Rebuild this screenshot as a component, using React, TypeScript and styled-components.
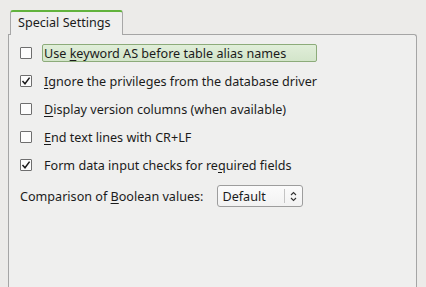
import React from "react";
import styled, { createGlobalStyle } from "styled-components";

const Global = createGlobalStyle`
  html, body { margin: 0; padding: 0; background: #ecebe9; overflow: hidden; }
  body { font-family: "Noto Sans", "Open Sans", sans-serif; font-size: 12.6px; color: #1b1b1b; }
`;

const Page = styled.div`
  width: 426px;
  height: 287px;
  padding: 10px 0 0 8px;
  box-sizing: border-box;
  display: flex;
  flex-direction: column;
`;

const TabBar = styled.div`
  display: flex;
  padding-left: 2px;
`;

const Tab = styled.div`
  position: relative;
  z-index: 1;
  margin-bottom: -1px;
  width: 113px;
  height: 25px;
  box-sizing: border-box;
  border: 1px solid #a7a7a7;
  border-top: 2px solid #62b33d;
  border-bottom: none;
  border-radius: 3px 3px 0 0;
  background: #efefee;
  padding-left: 7px;
  display: flex;
  align-items: center;
  line-height: 1;
`;

const Panel = styled.div`
  width: 409px;
  height: 270px;
  box-sizing: border-box;
  border: 1px solid #a5a5a5;
  border-bottom: none;
  border-radius: 0 3px 0 0;
  background: #efefee;
  padding: 4px 0 0 11px;
  display: flex;
  flex-direction: column;
`;

const Row = styled.label`
  display: flex;
  align-items: center;
  height: 28px;
`;

const Box = styled.span`
  width: 12px;
  height: 12px;
  box-sizing: border-box;
  border: 1px solid #6e6e6e;
  border-radius: 1px;
  background: #fcfcfc;
  display: flex;
  align-items: center;
  justify-content: center;
  margin-right: 10px;
  flex: none;
`;

const Text = styled.span<{ $hl?: boolean }>`
  box-sizing: border-box;
  height: 18px;
  display: flex;
  align-items: center;
  padding: 0 2px 0 1px;
  border: 1px solid ${(p) => (p.$hl ? "#8cab7a" : "transparent")};
  border-radius: 2px;
  background: ${(p) => (p.$hl ? "linear-gradient(#e0eed9, #d3e5ca)" : "transparent")};
  width: ${(p) => (p.$hl ? "275px" : "auto")};
  white-space: pre;
`;

const U = styled.span`
  text-decoration: underline;
  text-underline-offset: 2px;
`;

const ComboRow = styled.div`
  display: flex;
  align-items: center;
  height: 28px;
  margin-top: 3px;
`;

const ComboLabel = styled.span`
  margin-right: 14px;
  white-space: pre;
`;

const Combo = styled.div`
  width: 86px;
  height: 22px;
  box-sizing: border-box;
  border: 1px solid #9d9d9d;
  border-radius: 3px;
  background: linear-gradient(#fbfbfb, #f2f2f2);
  display: flex;
  align-items: center;
`;

const ComboText = styled.span`
  flex: 1;
  padding-left: 4px;
`;

const ComboBtn = styled.span`
  width: 17px;
  height: 14px;
  border-left: 1px solid #c4c4c4;
  display: flex;
  align-items: center;
  justify-content: center;
`;

const Check = () => (
  <svg width="10" height="10" viewBox="0 0 10 10">
    <path d="M1.5 5 L4 7.8 L8.6 1.6" fill="none" stroke="#1a1a1a" strokeWidth="1.5" />
  </svg>
);

const Spin = () => (
  <svg width="7" height="11" viewBox="0 0 7 11">
    <path d="M1 4 L3.5 1.5 L6 4 M1 7 L3.5 9.5 L6 7" fill="none" stroke="#333" strokeWidth="1.1" />
  </svg>
);

const Item = ({ checked, hl, children }: { checked?: boolean; hl?: boolean; children: React.ReactNode }) => (
  <Row>
    <Box>{checked && <Check />}</Box>
    <Text $hl={hl}>{children}</Text>
  </Row>
);

export default function App() {
  return (
    <>
      <Global />
      <Page>
        <TabBar>
          <Tab>Special Settings</Tab>
        </TabBar>
        <Panel>
          <Item hl>
            Use <U>k</U>eyword AS before table alias names
          </Item>
          <Item checked>
            <U>I</U>gnore the privileges from the database driver
          </Item>
          <Item>
            <U>D</U>isplay version columns (when available)
          </Item>
          <Item>
            <U>E</U>nd text lines with CR+LF
          </Item>
          <Item checked>
            Form data input checks for re<U>q</U>uired fields
          </Item>
          <ComboRow>
            <ComboLabel>
              Comparison of <U>B</U>oolean values:
            </ComboLabel>
            <Combo>
              <ComboText>Default</ComboText>
              <ComboBtn>
                <Spin />
              </ComboBtn>
            </Combo>
          </ComboRow>
        </Panel>
      </Page>
    </>
  );
}
